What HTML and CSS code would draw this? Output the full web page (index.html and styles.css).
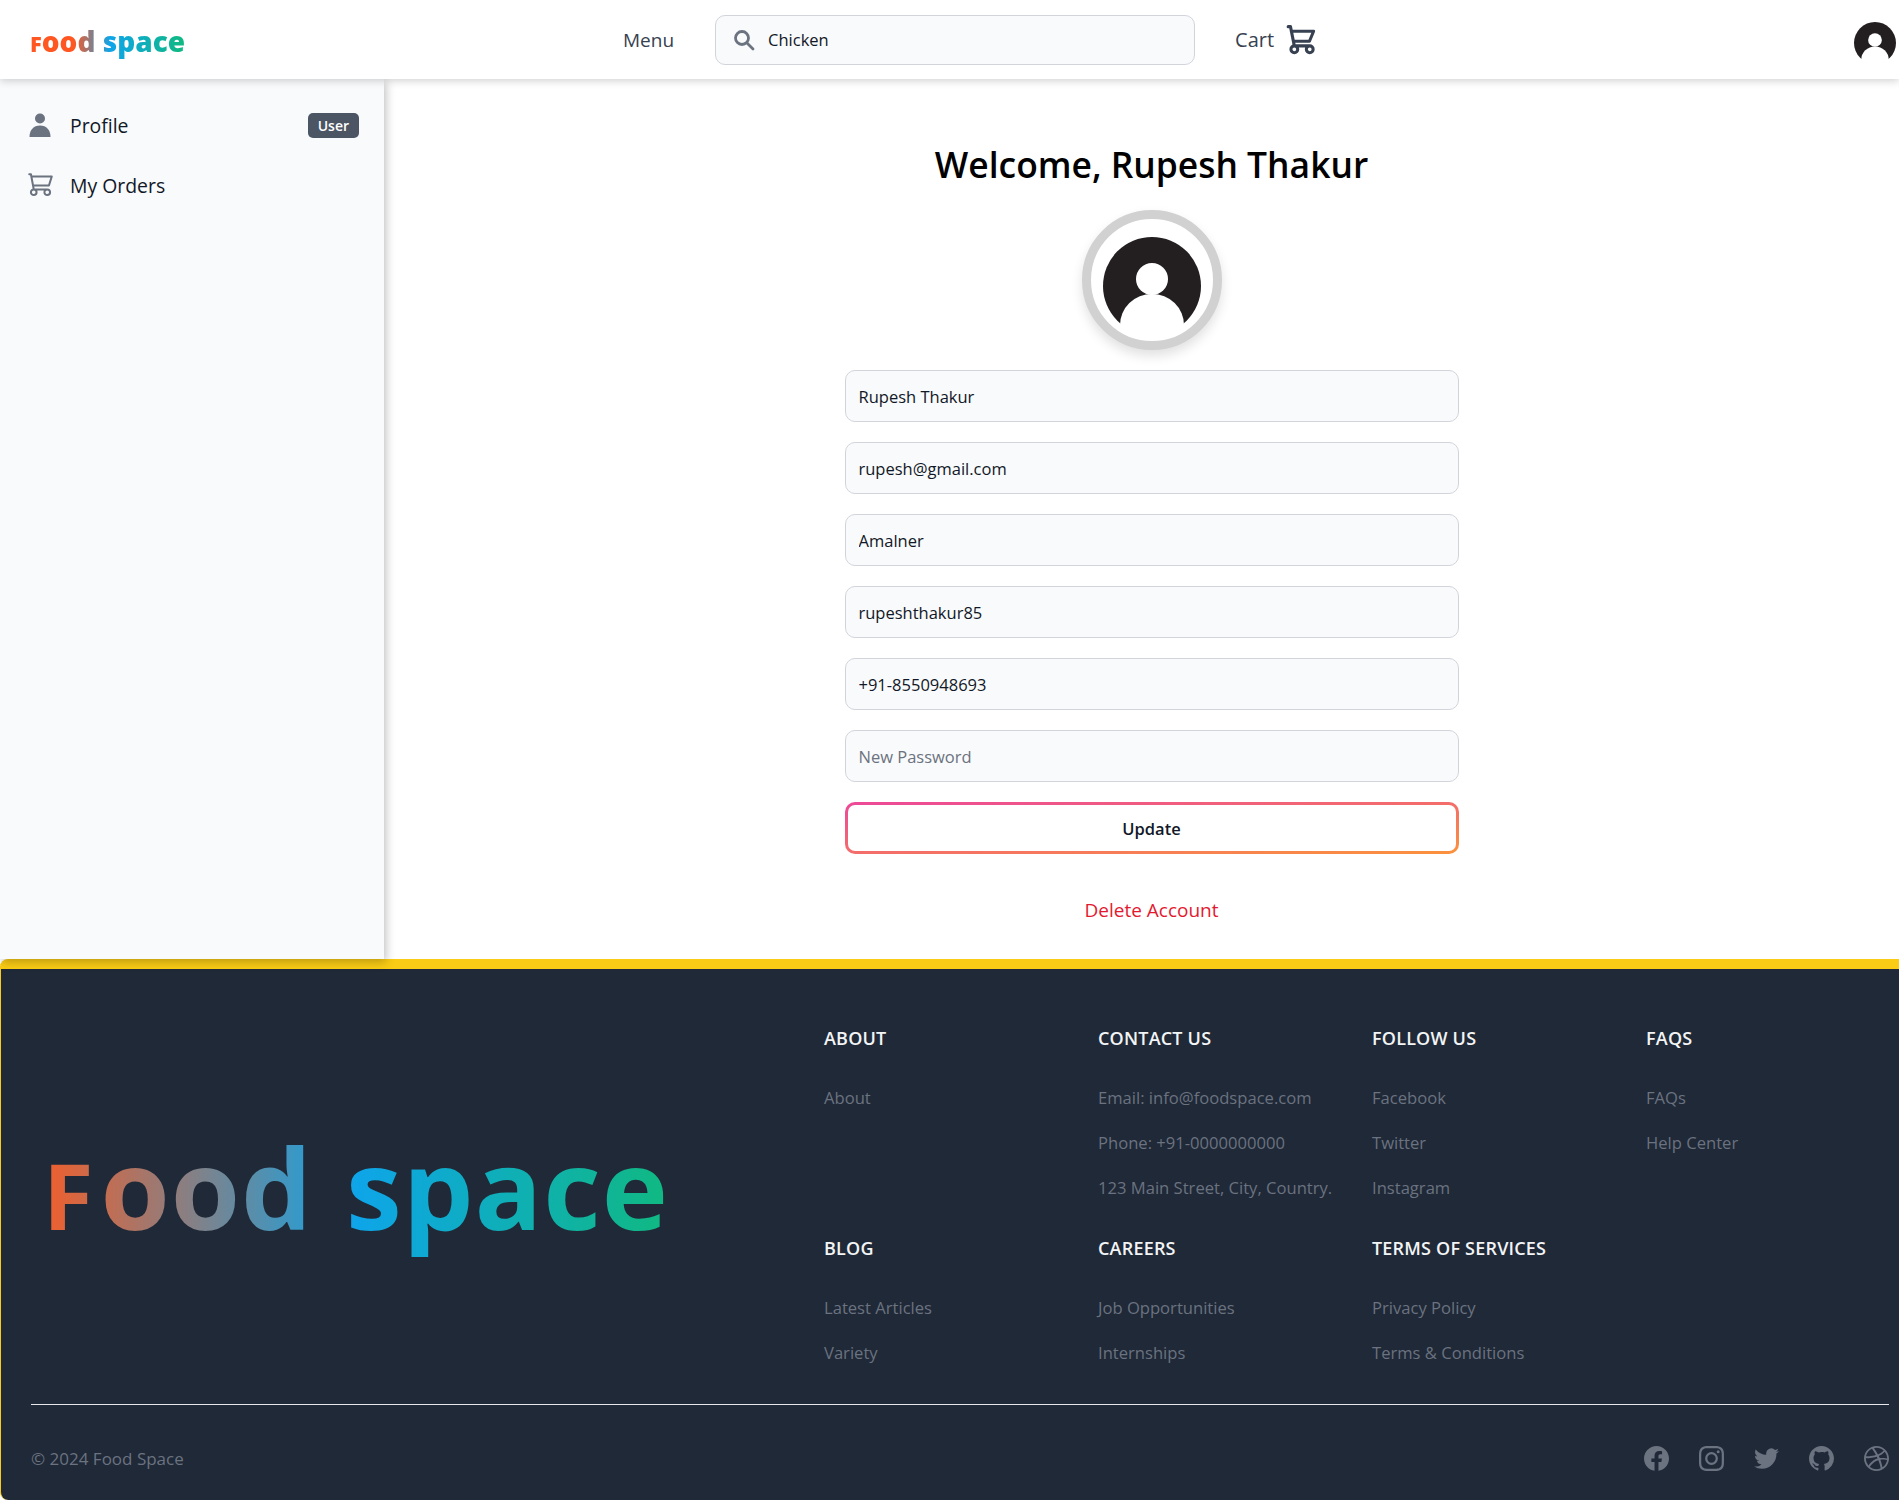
FILE: index.html
```html
<!DOCTYPE html>
<html lang="en">
<head>
    <meta charset="UTF-8">
    <meta name="viewport" content="width=device-width, initial-scale=1.0">
    <title>Food Space - Profile</title>
    <link rel="stylesheet" href="styles.css">
</head>
<body>
    <header class="navbar">
        <a href="#" class="logo logo-small"><span class="logo-cap">F</span>ood space</a>
        <div class="nav-center">
            <a href="#" class="nav-link">Menu</a>
            <div class="search-box">
                <svg class="search-icon" viewBox="0 0 24 24" fill="none" stroke="currentColor" stroke-width="2.800" stroke-linecap="round"><circle cx="10" cy="10" r="6.500"/><path d="M15 15l6 6"/></svg>
                <input type="text" class="search-input" value="Chicken">
            </div>
            <a href="#" class="nav-link cart-link">
                Cart
                <svg class="cart-icon" viewBox="0 0 24 24" fill="none" stroke="currentColor" stroke-width="2" stroke-linecap="round" stroke-linejoin="round"><path d="M4 3h1.500L8 15.500m0 0h10m-10 0a2.200 2.200 0 1 0 0 4.400 2.200 2.200 0 0 0 0-4.400Zm10 0a2.200 2.200 0 1 0 0 4.400 2.200 2.200 0 0 0 0-4.400ZM7.600 12.500h10.200L20.500 6H6"/></svg>
            </a>
        </div>
        <svg class="nav-avatar" viewBox="0 0 98 98"><circle cx="49" cy="49" r="49" fill="#231f20"/><circle cx="49" cy="42" r="16" fill="#fff"/><path d="M17 88a32 31 0 0 1 64 0a49 49 0 0 1-64 0Z" fill="#fff"/></svg>
    </header>

    <div class="layout">
        <aside class="sidebar">
            <a href="#" class="side-item">
                <svg class="side-icon" viewBox="0 0 24 24" fill="currentColor"><circle cx="12" cy="5.500" r="5"/><path d="M1.500 24c0-7 4-11.500 10.500-11.500S22.500 17 22.500 24Z"/></svg>
                <span class="side-label">Profile</span>
                <span class="badge">User</span>
            </a>
            <a href="#" class="side-item">
                <svg class="side-icon side-icon-cart" viewBox="0 0 24 24" fill="none" stroke="currentColor" stroke-width="1.800" stroke-linecap="round" stroke-linejoin="round"><path d="M2 2h1.500L6 15.500m0 0h12m-12 0a2.500 2.500 0 1 0 0 5 2.500 2.500 0 0 0 0-5Zm12 0a2.500 2.500 0 1 0 0 5 2.500 2.500 0 0 0 0-5ZM5.500 12h14L22 4H4"/></svg>
                <span class="side-label">My Orders</span>
            </a>
        </aside>

        <main class="content">
            <h1 class="welcome">Welcome, Rupesh Thakur</h1>
            <div class="avatar-ring">
                <svg class="avatar-img" viewBox="0 0 98 98"><circle cx="49" cy="49" r="49" fill="#231f20"/><circle cx="49" cy="42" r="16" fill="#fff"/><path d="M17 88a32 31 0 0 1 64 0a49 49 0 0 1-64 0Z" fill="#fff"/></svg>
            </div>
            <form class="profile-form">
                <input class="field" type="text" value="Rupesh Thakur">
                <input class="field" type="text" value="rupesh@gmail.com">
                <input class="field" type="text" value="Amalner">
                <input class="field" type="text" value="rupeshthakur85">
                <input class="field" type="text" value="+91-8550948693">
                <input class="field" type="password" placeholder="New Password">
                <div class="update-border">
                    <button type="button" class="update-btn">Update</button>
                </div>
            </form>
            <a href="#" class="delete-link">Delete Account</a>
        </main>
    </div>

    <footer class="footer">
        <div class="footer-top">
            <div class="footer-brand">
                <a href="#" class="logo logo-big"><span class="logo-cap">F</span>ood space</a>
            </div>
            <div class="footer-grid">
                <div class="footer-col">
                    <h2>About</h2>
                    <a href="#">About</a>
                </div>
                <div class="footer-col">
                    <h2>Contact Us</h2>
                    <a href="#">Email: info@foodspace.com</a>
                    <a href="#">Phone: +91-0000000000</a>
                    <a href="#">123 Main Street, City, Country.</a>
                </div>
                <div class="footer-col">
                    <h2>Follow Us</h2>
                    <a href="#">Facebook</a>
                    <a href="#">Twitter</a>
                    <a href="#">Instagram</a>
                </div>
                <div class="footer-col">
                    <h2>FAQs</h2>
                    <a href="#">FAQs</a>
                    <a href="#">Help Center</a>
                </div>
                <div class="footer-col">
                    <h2>Blog</h2>
                    <a href="#">Latest Articles</a>
                    <a href="#">Variety</a>
                </div>
                <div class="footer-col">
                    <h2>Careers</h2>
                    <a href="#">Job Opportunities</a>
                    <a href="#">Internships</a>
                </div>
                <div class="footer-col">
                    <h2>Terms of Services</h2>
                    <a href="#">Privacy Policy</a>
                    <a href="#">Terms &amp; Conditions</a>
                </div>
            </div>
        </div>
        <div class="footer-bottom">
            <span class="copyright">© 2024 Food Space</span>
            <div class="social">
                <a href="#"><svg viewBox="2 2 20 20" fill="currentColor"><path d="M22 12c0-5.523-4.477-10-10-10S2 6.477 2 12c0 4.991 3.657 9.128 8.438 9.878v-6.987h-2.540V12h2.540V9.797c0-2.506 1.492-3.890 3.777-3.890 1.094 0 2.238.195 2.238.195v2.460h-1.260c-1.243 0-1.630.771-1.630 1.562V12h2.773l-.443 2.890h-2.330v6.988C18.343 21.128 22 16.991 22 12z"/></svg></a>
                <a href="#"><svg viewBox="2 2 20 20" fill="currentColor"><path fill-rule="evenodd" d="M12.315 2c2.430 0 2.784.013 3.808.060 1.064.049 1.791.218 2.427.465a4.902 4.902 0 011.772 1.153 4.902 4.902 0 011.153 1.772c.247.636.416 1.363.465 2.427.048 1.067.060 1.407.060 4.123v.080c0 2.643-.012 2.987-.060 4.043-.049 1.064-.218 1.791-.465 2.427a4.902 4.902 0 01-1.153 1.772 4.902 4.902 0 01-1.772 1.153c-.636.247-1.363.416-2.427.465-1.067.048-1.407.060-4.123.060h-.080c-2.643 0-2.987-.012-4.043-.060-1.064-.049-1.791-.218-2.427-.465a4.902 4.902 0 01-1.772-1.153 4.902 4.902 0 01-1.153-1.772c-.247-.636-.416-1.363-.465-2.427-.047-1.024-.060-1.379-.060-3.808v-.630c0-2.430.013-2.784.060-3.808.049-1.064.218-1.791.465-2.427a4.902 4.902 0 011.153-1.772A4.902 4.902 0 015.450 2.525c.636-.247 1.363-.416 2.427-.465C8.901 2.013 9.256 2 11.685 2h.630zm-.081 1.802h-.468c-2.456 0-2.784.011-3.807.058-.975.045-1.504.207-1.857.344-.467.182-.8.398-1.150.748-.35.35-.566.683-.748 1.150-.137.353-.3.882-.344 1.857-.047 1.023-.058 1.351-.058 3.807v.468c0 2.456.011 2.784.058 3.807.045.975.207 1.504.344 1.857.182.466.399.8.748 1.150.35.35.683.566 1.150.748.353.137.882.3 1.857.344 1.054.048 1.370.058 4.041.058h.080c2.597 0 2.917-.010 3.960-.058.976-.045 1.505-.207 1.858-.344.466-.182.8-.398 1.150-.748.35-.35.566-.683.748-1.150.137-.353.3-.882.344-1.857.048-1.055.058-1.370.058-4.041v-.080c0-2.597-.010-2.917-.058-3.960-.045-.976-.207-1.505-.344-1.858a3.097 3.097 0 00-.748-1.150 3.098 3.098 0 00-1.150-.748c-.353-.137-.882-.3-1.857-.344-1.023-.047-1.351-.058-3.807-.058zM12 6.865a5.135 5.135 0 110 10.270 5.135 5.135 0 010-10.270zm0 1.802a3.333 3.333 0 100 6.666 3.333 3.333 0 000-6.666zm5.338-3.205a1.200 1.200 0 110 2.400 1.200 1.200 0 010-2.400z"/></svg></a>
                <a href="#"><svg viewBox="2 2 20 20" fill="currentColor"><path d="M8.290 20.251c7.547 0 11.675-6.253 11.675-11.675 0-.178 0-.355-.012-.530A8.348 8.348 0 0022 5.920a8.190 8.190 0 01-2.357.646 4.118 4.118 0 001.804-2.270 8.224 8.224 0 01-2.605.996 4.107 4.107 0 00-6.993 3.743 11.650 11.650 0 01-8.457-4.287 4.106 4.106 0 001.270 5.477A4.072 4.072 0 012.800 9.713v.052a4.105 4.105 0 003.292 4.022 4.095 4.095 0 01-1.853.070 4.108 4.108 0 003.834 2.850A8.233 8.233 0 012 18.407a11.616 11.616 0 006.290 1.840"/></svg></a>
                <a href="#"><svg viewBox="2 2 20 20" fill="currentColor"><path fill-rule="evenodd" d="M12 2C6.477 2 2 6.484 2 12.017c0 4.425 2.865 8.180 6.839 9.504.5.092.682-.217.682-.483 0-.237-.008-.868-.013-1.703-2.782.605-3.369-1.343-3.369-1.343-.454-1.158-1.110-1.466-1.110-1.466-.908-.620.069-.608.069-.608 1.003.070 1.531 1.032 1.531 1.032.892 1.530 2.341 1.088 2.910.832.092-.647.35-1.088.636-1.338-2.220-.253-4.555-1.113-4.555-4.951 0-1.093.390-1.988 1.029-2.688-.103-.253-.446-1.272.098-2.650 0 0 .840-.270 2.750 1.026A9.564 9.564 0 0112 6.844c.850.004 1.705.115 2.504.337 1.909-1.296 2.747-1.027 2.747-1.027.546 1.379.202 2.398.1 2.651.640.7 1.028 1.595 1.028 2.688 0 3.848-2.339 4.695-4.566 4.943.359.309.678.920.678 1.855 0 1.338-.012 2.419-.012 2.747 0 .268.180.580.688.482A10.019 10.019 0 0022 12.017C22 6.484 17.522 2 12 2z"/></svg></a>
                <a href="#"><svg viewBox="2 2 20 20" fill="currentColor"><path fill-rule="evenodd" d="M12 2C6.480 2 2 6.480 2 12s4.480 10 10 10c5.510 0 10-4.480 10-10S17.510 2 12 2zm6.605 4.610a8.502 8.502 0 011.930 5.314c-.281-.054-3.101-.629-5.943-.271-.065-.141-.120-.293-.184-.445a25.416 25.416 0 00-.564-1.236c3.145-1.280 4.577-3.124 4.761-3.362zM12 3.475c2.170 0 4.154.813 5.662 2.148-.152.216-1.443 1.941-4.480 3.080-1.399-2.570-2.950-4.675-3.189-5A8.687 8.687 0 0112 3.475zm-3.633.803a53.896 53.896 0 013.167 4.935c-3.992 1.063-7.517 1.040-7.896 1.040a8.581 8.581 0 014.729-5.975zM3.453 12.010v-.260c.370.010 4.512.065 8.775-1.215.250.477.477.965.694 1.453-.109.033-.228.065-.336.098-4.404 1.420-6.747 5.303-6.942 5.629a8.522 8.522 0 01-2.190-5.705zM12 20.547a8.482 8.482 0 01-5.239-1.800c.152-.315 1.888-3.656 6.703-5.337.022-.010.033-.010.054-.022a35.318 35.318 0 011.823 6.475 8.400 8.400 0 01-3.341.684zm4.761-1.465c-.086-.520-.542-3.015-1.659-6.084 2.679-.423 5.022.271 5.314.369a8.468 8.468 0 01-3.655 5.715z"/></svg></a>
            </div>
        </div>
    </footer>
</body>
</html>
```

FILE: styles.css
```css
* {
    box-sizing: border-box;
}
body {
    margin: 0;
    font-family: "Open Sans", "Noto Sans", Arial, sans-serif;
    color: #111827;
    background-color: #ffffff;
    overflow-x: hidden;
}
a {
    color: inherit;
    text-decoration: none;
}

/* navbar */
.navbar {
    position: relative;
    z-index: 3;
    display: flex;
    align-items: center;
    height: 79px;
    padding-left: 30px;
    background-color: #ffffff;
    box-shadow: 0 2px 8px rgba(0, 0, 0, 0.18);
}
.logo {
    display: inline-block;
    white-space: nowrap;
    -webkit-background-clip: text;
    background-clip: text;
    color: transparent;
}
.logo-cap {
    font-size: 0.78em;
}
.logo-small {
    width: 154px;
    margin-top: 5px;
    font-size: 28px;
    font-weight: 800;
    line-height: 36px;
    background-image: linear-gradient(to right, #ff5722 28%, #0ea5e9 52%, #10b981 100%);
}
.logo-big {
    font-size: 112px;
    font-weight: 700;
    line-height: 140px;
    letter-spacing: 1px;
    word-spacing: 3px;
    background-image: linear-gradient(to right, #f05f2c, #0ea5e9 50%, #10b981);
}
.logo-big .logo-cap {
    margin-right: 6px;
    font-size: 0.82em;
}
.nav-center {
    display: flex;
    align-items: center;
    margin-left: 439px;
}
.nav-link {
    font-size: 19px;
    font-weight: 500;
    color: #374151;
}
.search-box {
    display: flex;
    align-items: center;
    width: 480px;
    height: 50px;
    margin: 0 40px 0 41px;
    padding-left: 16px;
    background-color: #f9fafb;
    border: 1px solid #d1d5db;
    border-radius: 10px;
}
.search-icon {
    width: 24px;
    height: 24px;
    color: #6b7280;
}
.search-input {
    flex: 1;
    margin-left: 10px;
    border: none;
    outline: none;
    background: transparent;
    font-family: inherit;
    font-size: 16.500px;
    color: #111827;
}
.cart-link {
    display: flex;
    align-items: center;
    gap: 8px;
    font-size: 20px;
}
.cart-icon {
    width: 37px;
    height: 37px;
    margin-top: 2px;
}
.nav-avatar {
    margin-left: auto;
    margin-right: 3px;
    margin-top: 6px;
    width: 42px;
    height: 42px;
}

/* sidebar + main */
.layout {
    display: flex;
    height: 880px;
}
.sidebar {
    position: relative;
    z-index: 2;
    flex: 0 0 384px;
    padding: 16px 25px 0 28px;
    background-color: #f9fafb;
    box-shadow: 2px 3px 9px rgba(0, 0, 0, 0.25);
}
.side-item {
    display: flex;
    align-items: center;
    height: 60px;
}
.side-icon {
    flex: 0 0 24px;
    width: 24px;
    height: 24px;
    color: #6b7280;
}
.side-icon-cart {
    flex: 0 0 27px;
    width: 27px;
    height: 27px;
    margin-left: -1px;
    margin-right: -2px;
}
.side-label {
    margin-left: 18px;
    font-size: 19.400px;
    font-weight: 500;
    color: #111827;
}
.badge {
    margin-left: auto;
    padding: 3px 10px;
    border-radius: 5px;
    background-color: #4b5563;
    color: #ffffff;
    font-size: 14px;
    font-weight: 600;
}
.content {
    flex: 1;
    display: flex;
    flex-direction: column;
    align-items: center;
    padding-left: 20px;
    padding-top: 58px;
}
.welcome {
    margin: 0;
    font-size: 35.400px;
    font-weight: 600;
    line-height: 54px;
    color: #000000;
}
.avatar-ring {
    display: flex;
    align-items: center;
    justify-content: center;
    width: 140px;
    height: 140px;
    margin-top: 19px;
    padding-top: 11px;
    border: 9px solid #d1d1d1;
    border-radius: 50%;
    background-color: #ffffff;
    box-shadow: 0 6px 12px rgba(0, 0, 0, 0.12);
}
.avatar-img {
    width: 98px;
    height: 98px;
}
.profile-form {
    display: flex;
    flex-direction: column;
    gap: 20px;
    width: 614px;
    margin-top: 20px;
}
.field {
    width: 100%;
    height: 52px;
    padding: 0 13px;
    border: 1px solid #d1d5db;
    border-radius: 10px;
    background-color: #f9fafb;
    font-family: inherit;
    font-size: 16.500px;
    color: #111827;
    outline: none;
}
.field::placeholder {
    color: #6b7280;
}
.update-border {
    height: 52px;
    padding: 3px;
    border-radius: 10px;
    background-image: linear-gradient(to bottom right, #ec4899, #fb923c);
}
.update-btn {
    width: 100%;
    height: 100%;
    border: none;
    border-radius: 7px;
    background-color: #ffffff;
    font-family: inherit;
    font-size: 16.500px;
    font-weight: 600;
    color: #111827;
    cursor: pointer;
}
.delete-link {
    margin-top: 43px;
    font-size: 19px;
    color: #e3192f;
}

/* footer */
.footer {
    position: relative;
    height: 541px;
    padding-left: 30px;
    padding-right: 10px;
    background-color: #1f2937;
    border-top: 10px solid #facc15;
    border-left: 1px solid #facc15;
    border-radius: 8px 0 0 8px;
}
.footer-top {
    display: flex;
    height: 435px;
}
.footer-brand {
    display: flex;
    align-items: center;
    flex: 0 0 793px;
    padding-left: 12px;
    padding-top: 9px;
}
.footer-grid {
    display: grid;
    flex: 1;
    grid-template-columns: 274px 274px 274px 1fr;
    grid-auto-rows: 210px;
    padding-top: 57px;
}
.footer-col {
    display: flex;
    flex-direction: column;
}
.footer-col h2 {
    margin: 0 0 36px;
    font-size: 18px;
    font-weight: 600;
    line-height: 24px;
    letter-spacing: 0.2px;
    text-transform: uppercase;
    color: #f3f4f6;
}
.footer-col a {
    margin-bottom: 21px;
    font-size: 16.600px;
    line-height: 24px;
    color: #6b7280;
    white-space: nowrap;
}
.footer-bottom {
    display: flex;
    align-items: flex-start;
    justify-content: space-between;
    height: 96px;
    padding-top: 41px;
    border-top: 1px solid #e5e7eb;
}
.copyright {
    font-size: 17px;
    line-height: 25px;
    color: #6b7280;
}
.social {
    display: flex;
    gap: 30px;
    color: #6b7280;
}
.social a {
    display: block;
    height: 25px;
}
.social svg {
    width: 25px;
    height: 25px;
}
```
